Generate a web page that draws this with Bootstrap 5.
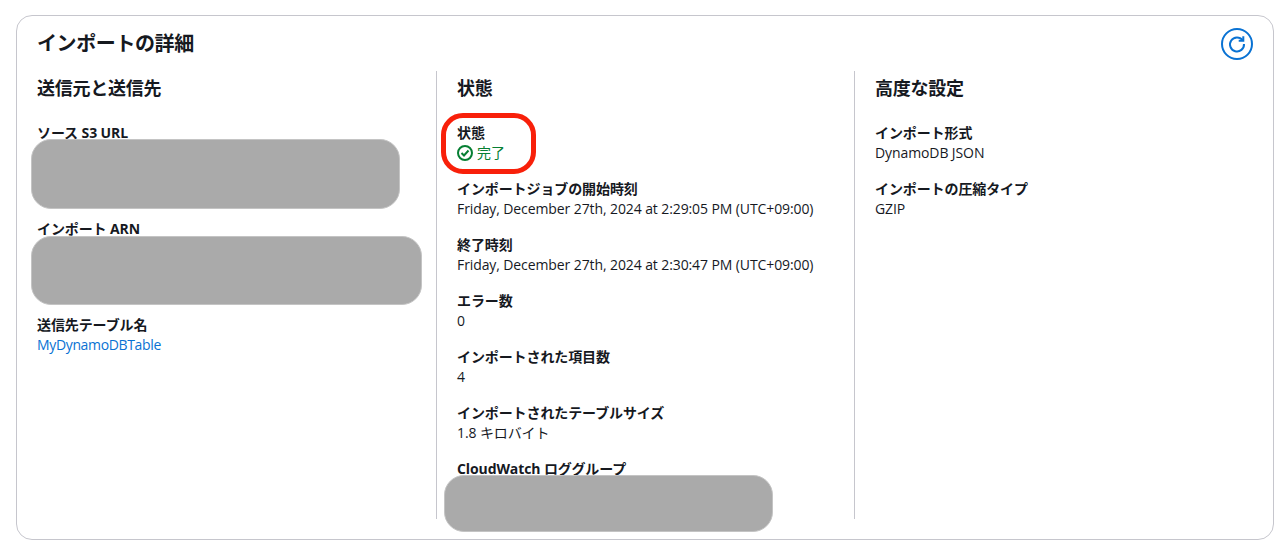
<!DOCTYPE html>
<html lang="ja">
<head>
    <meta charset="UTF-8">
    <meta name="viewport" content="width=device-width, initial-scale=1.0">
    <title>インポートの詳細</title>
    <link href="https://cdn.jsdelivr.net/npm/bootstrap@5.3.0/dist/css/bootstrap.min.css" rel="stylesheet">
    <style>
        body {
            font-family: "Open Sans", "Noto Sans CJK JP", sans-serif;
            font-size: 14px;
            line-height: 20px;
            letter-spacing: -0.1px;
            color: #16191f;
            background: #fff;
        }
        .detail-panel {
            position: relative;
            margin: 15px 13px 0 16px;
            height: 525px;
            border: 1px solid #c6c6cd;
            border-radius: 16px;
            padding: 0 20px 20px;
        }
        .panel-head {
            height: 55px;
            padding-top: 14px;
        }
        .panel-title {
            font-size: 20px;
            line-height: 28px;
            font-weight: 700;
            letter-spacing: -0.4px;
            margin: 0;
        }
        .refresh-btn {
            width: 32px;
            height: 32px;
            margin: -2px 0 0;
            padding: 0;
            border: 2px solid #0972d3;
            border-radius: 50%;
            background: #fff;
        }
        .detail-cols {
            height: 448px;
        }
        .detail-col {
            flex: 0 0 418px;
            padding: 6px 20px 0;
            border-left: 1px solid #c6c6cd;
        }
        .detail-col:first-child {
            flex-basis: 399px;
            padding-left: 0;
            border-left: 0;
        }
        .detail-col:last-child {
            flex: 1 1 auto;
        }
        .col-title {
            font-size: 18px;
            line-height: 22px;
            font-weight: 700;
            letter-spacing: -0.25px;
            margin: 0 0 24px;
        }
        .field-item {
            margin-bottom: 16px;
        }
        .field-label {
            font-weight: 700;
        }
        .field-link {
            color: #0972d3;
            text-decoration: none;
            letter-spacing: -0.35px;
        }
        .field-ok {
            color: #067f33;
        }
        .hidden-value {
            height: 60px;
        }
        .redact-box {
            position: absolute;
            background: #aaa;
            border: 1px solid #c4c4c4;
            border-radius: 20px;
        }
        .redact-one { left: 14px; top: 123px; width: 369px; height: 70px; }
        .redact-two { left: 14px; top: 220px; width: 391px; height: 69px; }
        .redact-three { left: 427px; top: 459px; width: 329px; height: 57px; }
        .callout-ring {
            position: absolute;
            left: 424px;
            top: 97px;
            width: 95px;
            height: 61px;
            border: 5px solid #f8200a;
            border-radius: 22px;
        }
    </style>
</head>
<body>
    <div class="detail-panel">
        <div class="panel-head d-flex justify-content-between align-items-start">
            <h2 class="panel-title">インポートの詳細</h2>
            <button type="button" class="refresh-btn d-flex align-items-center justify-content-center" aria-label="更新">
                <svg width="20" height="20" viewBox="0 0 20 20" fill="none" stroke="#0972d3" stroke-width="2">
                    <path d="M15.6 6.2A7 7 0 1 0 17 10"/>
                    <path d="M16.3 2.2v4.6h-4.6" stroke-linejoin="miter"/>
                </svg>
            </button>
        </div>
        <div class="detail-cols d-flex">
            <div class="detail-col">
                <h3 class="col-title">送信元と送信先</h3>
                <div class="field-item">
                    <div class="field-label">ソース S3 URL</div>
                    <div class="hidden-value"></div>
                </div>
                <div class="field-item">
                    <div class="field-label">インポート ARN</div>
                    <div class="hidden-value"></div>
                </div>
                <div class="field-item">
                    <div class="field-label">送信先テーブル名</div>
                    <a class="field-link" href="#">MyDynamoDBTable</a>
                </div>
            </div>
            <div class="detail-col">
                <h3 class="col-title">状態</h3>
                <div class="field-item">
                    <div class="field-label">状態</div>
                    <div class="field-ok d-flex align-items-center gap-1">
                        <svg width="16" height="16" viewBox="0 0 16 16" fill="none" stroke="#067f33" stroke-width="2">
                            <circle cx="8" cy="8" r="7"/>
                            <path d="M4.5 8 7 10.5 11.5 5.5"/>
                        </svg>
                        <span>完了</span>
                    </div>
                </div>
                <div class="field-item">
                    <div class="field-label">インポートジョブの開始時刻</div>
                    <div>Friday, December 27th, 2024 at 2:29:05 PM (UTC+09:00)</div>
                </div>
                <div class="field-item">
                    <div class="field-label">終了時刻</div>
                    <div>Friday, December 27th, 2024 at 2:30:47 PM (UTC+09:00)</div>
                </div>
                <div class="field-item">
                    <div class="field-label">エラー数</div>
                    <div>0</div>
                </div>
                <div class="field-item">
                    <div class="field-label">インポートされた項目数</div>
                    <div>4</div>
                </div>
                <div class="field-item">
                    <div class="field-label">インポートされたテーブルサイズ</div>
                    <div>1.8 キロバイト</div>
                </div>
                <div class="field-item">
                    <div class="field-label">CloudWatch ロググループ</div>
                </div>
            </div>
            <div class="detail-col">
                <h3 class="col-title">高度な設定</h3>
                <div class="field-item">
                    <div class="field-label">インポート形式</div>
                    <div>DynamoDB JSON</div>
                </div>
                <div class="field-item">
                    <div class="field-label">インポートの圧縮タイプ</div>
                    <div>GZIP</div>
                </div>
            </div>
        </div>
        <div class="redact-box redact-one"></div>
        <div class="redact-box redact-two"></div>
        <div class="redact-box redact-three"></div>
        <div class="callout-ring"></div>
    </div>

    <script src="https://cdn.jsdelivr.net/npm/bootstrap@5.3.0/dist/js/bootstrap.bundle.min.js"></script>
</body>
</html>
